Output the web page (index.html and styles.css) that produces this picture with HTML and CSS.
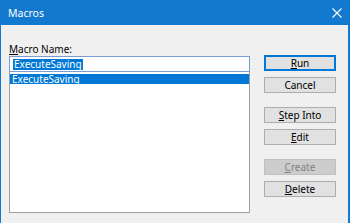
FILE: index.html
```html
<!DOCTYPE html>
<html>
<head>
<meta charset="utf-8">
<link rel="stylesheet" href="styles.css">
</head>
<body>
<div class="window">
  <div class="titlebar">
    <span class="title">Macros</span>
    <svg class="close" width="10" height="10" viewBox="0 0 10 10"><path d="M0.5 0.5 L9.5 9.5 M9.5 0.5 L0.5 9.5" stroke="#fff" stroke-width="1.1" fill="none"/></svg>
  </div>
  <div class="client">
    <div class="left">
      <div class="label"><u>M</u>acro Name:</div>
      <div class="input"><span class="sel">ExecuteSaving</span></div>
      <div class="list">
        <div class="item selected">ExecuteSaving</div>
      </div>
    </div>
    <div class="buttons">
      <div class="btn default"><u>R</u>un</div>
      <div class="btn">Cancel</div>
      <div class="btn gap"><u>S</u>tep Into</div>
      <div class="btn"><u>E</u>dit</div>
      <div class="btn gap disabled"><u>C</u>reate</div>
      <div class="btn"><u>D</u>elete</div>
    </div>
  </div>
</div>
</body>
</html>
```

FILE: styles.css
```css
html, body {
  margin: 0;
  padding: 0;
}
body {
  width: 350px;
  height: 223px;
  overflow: hidden;
  font-family: "Noto Sans", "Open Sans", sans-serif;
  font-size: 10px;
  color: #000;
}
.window {
  width: 350px;
  height: 223px;
  display: flex;
  flex-direction: column;
  background: #1379cf;
}
.titlebar {
  height: 25px;
  flex: none;
  display: flex;
  align-items: center;
  justify-content: space-between;
  padding: 0 8px 0 8px;
  color: #fff;
}
.title {
  font-size: 10.5px;
  line-height: 14px;
}
.client {
  flex: 1;
  margin: 0 2px 0 1px;
  background: #f0f0f0;
  display: flex;
  gap: 14px;
}
.left {
  padding-left: 8px;
  width: 241px;
  display: flex;
  flex-direction: column;
}
.label {
  margin-top: 18px;
  line-height: 13px;
  height: 13px;
}
.label u, .btn u {
  text-decoration-thickness: 1px;
  text-underline-offset: 1px;
}
.input {
  margin-top: 0;
  height: 14px;
  border: 1px solid #7a9bd6;
  background: #fff;
  display: flex;
  align-items: center;
  padding-left: 3px;
}
.sel {
  background: #0078d7;
  color: #fff;
  line-height: 11px;
  height: 11px;
  padding: 0 1px;
}
.list {
  height: 138px;
  border: 1px solid #a0a0a0;
  border-top: none;
  background: #fff;
  padding: 2px 0 0 0;
}
.item {
  height: 10px;
  line-height: 10px;
  padding-left: 2px;
}
.item.selected {
  background: #0078d7;
  color: #fff;
}
.buttons {
  display: flex;
  flex-direction: column;
  width: 72px;
  padding-top: 30px;
}
.btn {
  box-sizing: border-box;
  height: 16px;
  border: 1px solid #adadad;
  background: #e1e1e1;
  display: flex;
  align-items: center;
  justify-content: center;
  line-height: 12px;
  margin-bottom: 6px;
}
.btn.gap {
  margin-top: 8px;
}
.btn.default {
  border: 2px solid #0078d7;
}
.btn.disabled {
  background: #cccccc;
  border-color: #bfbfbf;
  color: #838383;
}
```
